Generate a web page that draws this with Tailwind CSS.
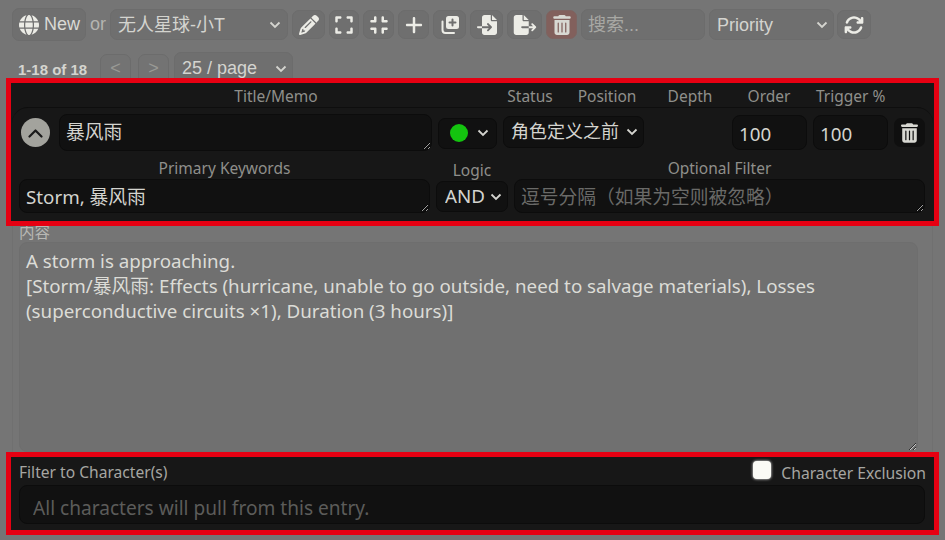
<!DOCTYPE html>
<html lang="en">
<head>
<meta charset="UTF-8" />
<title>World Info</title>
<script src="https://cdn.jsdelivr.net/npm/@tailwindcss/browser@4"></script>
</head>
<body class="w-[945px] h-[540px] overflow-hidden bg-[#757575] font-['Noto_Sans','Noto_Sans_CJK_SC',sans-serif] text-[#d4d4cf] scheme-dark">

<!-- toolbar -->
<div class="flex items-center h-[33px] mt-2 pl-3">
    <button class="flex items-center w-[74px] h-[33px] pl-[6px] gap-[5px] rounded-[7px] border border-[#6c6c6c] bg-[#6f6f6f] text-[18px] font-['Liberation_Sans','Noto_Sans_CJK_SC',sans-serif] text-[#dadad5]">
        <svg class="w-[20px] h-[20px] fill-[#ecece6]" viewBox="0 0 512 512"><path d="M352 256c0 22.2-1.2 43.6-3.3 64H163.3c-2.2-20.4-3.3-41.8-3.3-64s1.2-43.6 3.3-64H348.7c2.2 20.4 3.3 41.8 3.3 64zm28.8-64H503.9c5.3 20.5 8.1 41.9 8.1 64s-2.8 43.5-8.1 64H380.8c2.1-20.6 3.2-42 3.2-64s-1.1-43.4-3.2-64zm112.6-32H376.7c-10-63.9-29.8-117.4-55.3-151.6c78.3 20.7 142 77.5 171.9 151.6zm-149.1 0H167.7c6.1-36.4 15.5-68.6 27-94.7c10.5-23.6 22.2-40.7 33.5-51.5C239.4 3.2 248.7 0 256 0s16.6 3.2 27.8 13.8c11.3 10.8 23 27.9 33.5 51.5c11.6 26 20.9 58.2 27 94.7zm-209 0H18.6C48.6 85.9 112.2 29.1 190.6 8.4C165.1 42.6 145.3 96.1 135.3 160zM8.1 192H131.2c-2.1 20.6-3.2 42-3.2 64s1.1 43.4 3.2 64H8.1C2.8 299.5 0 278.1 0 256s2.8-43.5 8.1-64zM194.7 446.6c-11.6-26-20.9-58.2-27-94.6H344.3c-6.1 36.4-15.5 68.6-27 94.6c-10.5 23.6-22.2 40.7-33.5 51.5C272.6 508.8 263.3 512 256 512s-16.6-3.2-27.8-13.8c-11.3-10.8-23-27.9-33.5-51.5zM135.3 352c10 63.9 29.8 117.4 55.3 151.6C112.2 482.9 48.6 426.1 18.6 352H135.3zm358.1 0c-30 74.1-93.6 130.9-171.9 151.6c25.5-34.2 45.2-87.7 55.3-151.6H493.4z"/></svg>
        New
    </button>
    <span class="w-[24px] text-center text-[18px] font-['Liberation_Sans',sans-serif] text-[#b4b4b0]">or</span>
    <div class="relative">
        <select class="block appearance-none w-[178px] h-[31px] pl-[7px] pt-[1px] rounded-[7px] border border-[#6c6c6c] bg-[#6f6f6f] text-[18px] font-['Liberation_Sans','Noto_Sans_CJK_SC',sans-serif] text-[#d4d4cf]"><option>无人星球-小T</option></select>
        <svg class="absolute right-[7px] top-[12px] w-[12px] h-[8px] pointer-events-none" viewBox="0 0 12 8"><path d="M1.5 1.5 6 6l4.5-4.5" fill="none" stroke="#d4d4cf" stroke-width="1.8"/></svg>
    </div>
    <div class="flex items-center gap-[4px] ml-[4px]">
        <button class="flex items-center justify-center w-[33px] h-[29px] rounded-[7px] border border-[#6c6c6c] bg-[#6f6f6f]">
            <svg class="w-[20px] h-[20px] fill-[#ecece6]" viewBox="0 0 512 512"><path d="M410.3 231l11.3-11.3-33.9-33.9-62.1-62.1L291.7 89.8l-11.3 11.3-22.6 22.6L58.6 322.9c-10.4 10.4-18 23.3-22.2 37.4L1 480.7c-2.5 8.4-.2 17.5 6.1 23.7s15.3 8.5 23.7 6.1l120.3-35.4c14.1-4.2 27-11.8 37.4-22.2L387.7 253.7 410.3 231zM160 399.4l-9.1 22.7c-4 3.1-8.5 5.4-13.3 6.9L59.4 452l23-78.1c1.4-4.9 3.8-9.4 6.9-13.3l22.7-9.1v32c0 8.8 7.2 16 16 16h32zM362.7 18.7L348.3 33.2 325.7 55.8 314.3 67.1l33.9 33.9 62.1 62.1 33.9 33.9 11.3-11.3 22.6-22.6 14.5-14.5c25-25 25-65.5 0-90.5L453.3 18.7c-25-25-65.5-25-90.5 0zm-47.4 168l-144 144c-6.2 6.2-16.4 6.2-22.6 0s-6.2-16.4 0-22.6l144-144c6.2-6.2 16.4-6.2 22.6 0s6.2 16.4 0 22.6z"/></svg>
        </button>
        <button class="flex items-center justify-center w-[30px] h-[29px] rounded-[7px] border border-[#6c6c6c] bg-[#6f6f6f]">
            <svg class="w-[18px] h-[20px] fill-[#ecece6]" viewBox="0 0 448 512"><path d="M32 32C14.3 32 0 46.3 0 64v96c0 17.7 14.3 32 32 32s32-14.3 32-32V96h64c17.7 0 32-14.3 32-32s-14.3-32-32-32H32zM64 352c0-17.7-14.3-32-32-32s-32 14.3-32 32v96c0 17.7 14.3 32 32 32h96c17.7 0 32-14.3 32-32s-14.3-32-32-32H64V352zM320 32c-17.7 0-32 14.3-32 32s14.3 32 32 32h64v64c0 17.7 14.3 32 32 32s32-14.3 32-32V64c0-17.7-14.3-32-32-32H320zM448 352c0-17.7-14.3-32-32-32s-32 14.3-32 32v64H320c-17.7 0-32 14.3-32 32s14.3 32 32 32h96c17.7 0 32-14.3 32-32V352z"/></svg>
        </button>
        <button class="flex items-center justify-center w-[31px] h-[29px] rounded-[7px] border border-[#6c6c6c] bg-[#6f6f6f]">
            <svg class="w-[18px] h-[20px] fill-[#ecece6]" viewBox="0 0 448 512"><path d="M160 64c0-17.7-14.3-32-32-32s-32 14.3-32 32v64H32c-17.7 0-32 14.3-32 32s14.3 32 32 32h96c17.7 0 32-14.3 32-32V64zM32 320c-17.7 0-32 14.3-32 32s14.3 32 32 32H96v64c0 17.7 14.3 32 32 32s32-14.3 32-32V352c0-17.7-14.3-32-32-32H32zM352 64c0-17.7-14.3-32-32-32s-32 14.3-32 32v96c0 17.7 14.3 32 32 32h96c17.7 0 32-14.3 32-32s-14.3-32-32-32H352V64zM320 320c-17.7 0-32 14.3-32 32v96c0 17.7 14.3 32 32 32s32-14.3 32-32V384h64c17.7 0 32-14.3 32-32s-14.3-32-32-32H320z"/></svg>
        </button>
        <button class="flex items-center justify-center w-[31px] h-[29px] rounded-[7px] border border-[#6c6c6c] bg-[#6f6f6f]">
            <svg class="w-[18px] h-[20px] fill-[#ecece6]" viewBox="0 0 448 512"><path d="M256 80c0-17.7-14.3-32-32-32s-32 14.3-32 32V224H48c-17.7 0-32 14.3-32 32s14.3 32 32 32H192V432c0 17.7 14.3 32 32 32s32-14.3 32-32V288H400c17.7 0 32-14.3 32-32s-14.3-32-32-32H256V80z"/></svg>
        </button>
        <button class="flex items-center justify-center w-[33px] h-[29px] rounded-[7px] border border-[#6c6c6c] bg-[#6f6f6f]">
            <svg class="w-[20px] h-[20px]" viewBox="0 0 20 20"><rect x="6" y="1" width="13" height="13" rx="2.5" fill="#ecece6"/><path d="M12.5 4.5v6M9.5 7.5h6" stroke="#6f6f6f" stroke-width="2" stroke-linecap="round"/><path d="M2.5 6.5v8.5a3 3 0 0 0 3 3H14" fill="none" stroke="#ecece6" stroke-width="2" stroke-linecap="round"/></svg>
        </button>
        <button class="flex items-center justify-center w-[33px] h-[29px] rounded-[7px] border border-[#6c6c6c] bg-[#6f6f6f]">
            <svg class="w-[22px] h-[20px] fill-[#ecece6]" viewBox="0 0 512 512"><path d="M128 64c0-35.3 28.7-64 64-64H352V128c0 17.7 14.3 32 32 32H512V448c0 35.3-28.7 64-64 64H192c-35.3 0-64-28.7-64-64V336H302.1l-39 39c-9.4 9.4-9.4 24.6 0 33.9s24.6 9.4 33.9 0l80-80c9.4-9.4 9.4-24.6 0-33.9l-80-80c-9.4-9.4-24.6-9.4-33.9 0s-9.4 24.6 0 33.9l39 39H128V64zm0 224v48H24c-13.3 0-24-10.7-24-24s10.7-24 24-24H128zM512 128H384V0L512 128z"/></svg>
        </button>
        <button class="flex items-center justify-center w-[35px] h-[29px] rounded-[7px] border border-[#6c6c6c] bg-[#6f6f6f]">
            <svg class="w-[24px] h-[20px] fill-[#ecece6]" viewBox="0 0 576 512"><path d="M0 64C0 28.7 28.7 0 64 0H224V128c0 17.7 14.3 32 32 32H384V288H216c-13.3 0-24 10.7-24 24s10.7 24 24 24H384V448c0 35.3-28.7 64-64 64H64c-35.3 0-64-28.7-64-64V64zM384 336V288H494.1l-39-39c-9.4-9.4-9.4-24.6 0-33.9s24.6-9.4 33.9 0l80 80c9.4 9.4 9.4 24.6 0 33.9l-80 80c-9.4 9.4-24.6 9.4-33.9 0s-9.4-24.6 0-33.9l39-39H384zm0-208H256V0L384 128z"/></svg>
        </button>
        <button class="flex items-center justify-center w-[31px] h-[29px] rounded-[7px] border border-[#7d6461] bg-[#82605c]">
            <svg class="w-[18px] h-[20px] fill-[#d8d8d2]" viewBox="0 0 448 512"><path d="M135.2 17.7C140.6 6.8 151.7 0 163.8 0H284.2c12.1 0 23.2 6.8 28.6 17.7L320 32h96c17.7 0 32 14.3 32 32s-14.3 32-32 32H32C14.3 96 0 81.7 0 64S14.3 32 32 32h96l7.2-14.3zM32 128H416V448c0 35.3-28.7 64-64 64H96c-35.3 0-64-28.7-64-64V128zm96 64c-8.8 0-16 7.2-16 16V432c0 8.8 7.2 16 16 16s16-7.2 16-16V208c0-8.8-7.2-16-16-16zm96 0c-8.8 0-16 7.2-16 16V432c0 8.8 7.2 16 16 16s16-7.2 16-16V208c0-8.8-7.2-16-16-16zm96 0c-8.8 0-16 7.2-16 16V432c0 8.8 7.2 16 16 16s16-7.2 16-16V208c0-8.8-7.2-16-16-16z"/></svg>
        </button>
    </div>
    <input class="w-[124px] h-[31px] ml-[4px] pl-[6px] pt-[2px] rounded-[7px] border border-[#6c6c6c] bg-[#6f6f6f] text-[18px] font-['Liberation_Sans','Noto_Sans_CJK_SC',sans-serif] placeholder:text-[#a8a8a4]" placeholder="搜索..." />
    <div class="relative ml-[4px]">
        <select class="block appearance-none w-[125px] h-[31px] pl-[7px] pt-[1px] rounded-[7px] border border-[#6c6c6c] bg-[#6f6f6f] text-[18px] font-['Liberation_Sans',sans-serif] text-[#d4d4cf]"><option>Priority</option></select>
        <svg class="absolute right-[6px] top-[12px] w-[12px] h-[8px] pointer-events-none" viewBox="0 0 12 8"><path d="M1.5 1.5 6 6l4.5-4.5" fill="none" stroke="#d4d4cf" stroke-width="1.8"/></svg>
    </div>
    <button class="flex items-center justify-center w-[34px] h-[29px] ml-[3px] rounded-[7px] border border-[#6c6c6c] bg-[#6f6f6f]">
        <svg class="w-[20px] h-[20px] fill-[#ecece6]" viewBox="0 0 512 512"><path d="M105.1 202.6c7.7-21.8 20.2-42.3 37.8-59.8c62.5-62.5 163.8-62.5 226.3 0L386.3 160H352c-17.7 0-32 14.3-32 32s14.3 32 32 32H463.5c0 0 0 0 0 0h.4c17.7 0 32-14.3 32-32V80c0-17.7-14.3-32-32-32s-32 14.3-32 32v35.2L414.4 97.6c-87.5-87.5-229.3-87.5-316.8 0C73.2 122 55.6 150.7 44.8 181.4c-5.9 16.7 2.9 34.9 19.5 40.8s34.9-2.9 40.8-19.5zM39 289.3c-5 1.5-9.8 4.2-13.7 8.2c-4 4-6.7 8.8-8.1 14c-.3 1.2-.6 2.5-.8 3.8c-.3 1.7-.4 3.4-.4 5.1V432c0 17.7 14.3 32 32 32s32-14.3 32-32V396.9l17.6 17.5 0 0c87.5 87.4 229.3 87.4 316.7 0c24.4-24.4 42.1-53.1 52.9-83.7c5.9-16.7-2.9-34.9-19.5-40.8s-34.9 2.9-40.8 19.5c-7.7 21.8-20.2 42.3-37.8 59.8c-62.5 62.5-163.8 62.5-226.3 0l-.1-.1L125.6 352H160c17.7 0 32-14.3 32-32s-14.3-32-32-32H48.4c-1.6 0-3.2 .1-4.8 .3s-3.1 .5-4.6 1z"/></svg>
    </button>
</div>

<!-- pagination -->
<div class="flex items-start h-[26px] mt-[11px] pl-[18px] font-['Liberation_Sans',sans-serif]">
    <span class="w-[82px] mt-[7px] text-[15px] font-bold text-[#d4d4cf]">1-18 of 18</span>
    <div class="w-[31px] h-[37px] mt-[2px] rounded-[7px] border border-[#6c6c6c] bg-[#737373] text-center text-[18px] leading-[26px] text-[#999995]">&lt;</div>
    <div class="w-[31px] h-[37px] mt-[2px] ml-[7px] rounded-[7px] border border-[#6c6c6c] bg-[#737373] text-center text-[18px] leading-[26px] text-[#999995]">&gt;</div>
    <div class="relative ml-[5px]">
        <select class="block appearance-none w-[119px] h-[37px] pl-[7px] pb-[5px] rounded-[7px] border border-[#6c6c6c] bg-[#6f6f6f] text-[18px] text-[#d4d4cf]"><option>25 / page</option></select>
        <svg class="absolute right-[6px] top-[13px] w-[12px] h-[8px] pointer-events-none" viewBox="0 0 12 8"><path d="M1.5 1.5 6 6l4.5-4.5" fill="none" stroke="#d4d4cf" stroke-width="1.8"/></svg>
    </div>
</div>

<!-- highlighted entry header -->
<div class="relative mx-[6px] h-[148px] border-[5px] border-[#e60012] bg-[#171717] text-[#8f8f8b] text-[15.5px]">
    <div class="flex h-[24px] leading-[26px] text-center whitespace-nowrap">
        <span class="w-[456px] ml-[37px]">Title/Memo</span>
        <span class="w-[52px]">Status</span>
        <span class="w-[102px]">Position</span>
        <span class="w-[64px]">Depth</span>
        <span class="w-[94px]">Order</span>
        <span class="w-[66px]">Trigger %</span>
    </div>
    <div class="flex items-center h-[50px] mx-[1px] rounded-t-[16px] border-t border-[#0e0e0e] text-[18.75px] text-[#d4d4cf]">
        <button class="flex items-center justify-center w-[29px] h-[29px] ml-[9px] rounded-full bg-[#a3a39d]">
            <svg class="w-[15px] h-[10px]" viewBox="0 0 15 10"><path d="M1.5 8.5l6-6 6 6" fill="none" stroke="#1a1a1a" stroke-width="2.2" stroke-linecap="round" stroke-linejoin="round"/></svg>
        </button>
        <textarea class="w-[373px] h-[37px] ml-[9px] px-[6px] py-[2px] rounded-[8px] border border-[#0c0c0c] bg-[#111111] leading-[30px] text-[#d4d4cf] overflow-hidden">暴风雨</textarea>
        <div class="flex items-center w-[59px] h-[31px] ml-[6px] mt-[1px] pl-[11px] gap-[9px] rounded-[7px] border border-[#0c0c0c] bg-[#111111]">
            <span class="w-[18px] h-[18px] rounded-full bg-[#14c40f]"></span>
            <svg class="w-[12px] h-[8px]" viewBox="0 0 12 8"><path d="M1.5 1.5 6 6l4.5-4.5" fill="none" stroke="#d4d4cf" stroke-width="1.8"/></svg>
        </div>
        <div class="relative ml-[6px] -mt-[1px]">
            <select class="block appearance-none w-[141px] h-[32px] pl-[7px] pb-[3px] rounded-[7px] border border-[#0c0c0c] bg-[#111111] text-[18px] font-['Noto_Sans_CJK_SC',sans-serif] text-[#d4d4cf]"><option>角色定义之前</option></select>
            <svg class="absolute right-[6px] top-[12px] w-[12px] h-[8px] pointer-events-none" viewBox="0 0 12 8"><path d="M1.5 1.5 6 6l4.5-4.5" fill="none" stroke="#d4d4cf" stroke-width="1.8"/></svg>
        </div>
        <input class="w-[75px] h-[35px] ml-[88px] pl-[6px] pt-[1px] rounded-[8px] border border-[#0c0c0c] bg-[#111111]" value="100" />
        <input class="w-[75px] h-[35px] ml-[6px] pl-[6px] pt-[1px] rounded-[8px] border border-[#0c0c0c] bg-[#111111]" value="100" />
        <button class="flex items-center justify-center w-[31px] h-[29px] ml-[6px] rounded-[7px] bg-[#0f0f0f]">
            <svg class="w-[17px] h-[20px] fill-[#d8d8d2]" viewBox="0 0 448 512"><path d="M135.2 17.7C140.6 6.8 151.7 0 163.8 0H284.2c12.1 0 23.2 6.8 28.6 17.7L320 32h96c17.7 0 32 14.3 32 32s-14.3 32-32 32H32C14.3 96 0 81.7 0 64S14.3 32 32 32h96l7.2-14.3zM32 128H416V448c0 35.3-28.7 64-64 64H96c-35.3 0-64-28.7-64-64V128zm96 64c-8.8 0-16 7.2-16 16V432c0 8.8 7.2 16 16 16s16-7.2 16-16V208c0-8.8-7.2-16-16-16zm96 0c-8.8 0-16 7.2-16 16V432c0 8.8 7.2 16 16 16s16-7.2 16-16V208c0-8.8-7.2-16-16-16zm96 0c-8.8 0-16 7.2-16 16V432c0 8.8 7.2 16 16 16s16-7.2 16-16V208c0-8.8-7.2-16-16-16z"/></svg>
        </button>
    </div>
    <div class="flex gap-[6px] px-[8px]">
        <div class="flex flex-col w-[411px]">
            <span class="h-[22px] text-center leading-[22px]">Primary Keywords</span>
            <textarea class="w-[411px] h-[34px] px-[6px] rounded-[8px] border border-[#0c0c0c] bg-[#111111] text-[18.75px] leading-[33px] text-[#d4d4cf] overflow-hidden">Storm, 暴风雨</textarea>
        </div>
        <div class="flex flex-col w-[72px]">
            <span class="h-[24px] text-center leading-[26px]">Logic</span>
            <div class="relative">
                <select class="block appearance-none w-[72px] h-[31px] pl-[8px] pb-[2px] rounded-[7px] border border-[#0c0c0c] bg-[#111111] text-[18.75px] text-[#d4d4cf]"><option>AND</option></select>
                <svg class="absolute right-[6px] top-[12px] w-[12px] h-[8px] pointer-events-none" viewBox="0 0 12 8"><path d="M1.5 1.5 6 6l4.5-4.5" fill="none" stroke="#d4d4cf" stroke-width="1.8"/></svg>
            </div>
        </div>
        <div class="flex flex-col w-[411px]">
            <span class="h-[22px] text-center leading-[22px]">Optional Filter</span>
            <textarea class="w-[411px] h-[34px] px-[6px] rounded-[8px] border border-[#0c0c0c] bg-[#111111] text-[18.75px] leading-[33px] overflow-hidden placeholder:text-[#6a6a68]" placeholder="逗号分隔（如果为空则被忽略）"></textarea>
        </div>
    </div>
</div>

<!-- entry content, dimmed -->
<div class="flex flex-col h-[226px] mx-[12px] px-[6px] border-x border-[#707070]">
    <span class="h-[16px] text-[15.5px] leading-[10px] text-[#b8b8b4] font-['Noto_Sans_CJK_SC',sans-serif]">内容</span>
    <textarea class="w-[899px] h-[210px] px-[6px] py-[5px] rounded-[8px] border border-[#6e6e6e] bg-[#707070] text-[18.75px] leading-[25px] text-[#dcdcd7] overflow-hidden">A storm is approaching.
[Storm/暴风雨: Effects (hurricane, unable to go outside, need to salvage materials), Losses (superconductive circuits ×1), Duration (3 hours)]</textarea>
</div>

<!-- highlighted character filter -->
<div class="relative mx-[6px] h-[83px] px-[8px] border-[5px] border-[#e60012] bg-[#171717] text-[15.5px] text-[#a6a6a2]">
    <div class="flex items-start h-[28px]">
        <span class="grow mt-[4px] text-[15.6px] leading-[22px]">Filter to Character(s)</span>
        <input type="checkbox" class="appearance-none w-[18px] h-[18px] mt-[4px] rounded-[4px] bg-[#fbfbf6] shadow-[0_0_3px_#ffffff]" />
        <span class="ml-[10px] mt-[5px] text-[15.7px] leading-[22px]">Character Exclusion</span>
    </div>
    <input class="w-[906px] h-[39px] px-[13px] pt-[7px] rounded-[8px] border border-[#0c0c0c] bg-[#111111] text-[19.1px] placeholder:text-[#5c5c5a]" placeholder="All characters will pull from this entry." />
</div>

</body>
</html>
